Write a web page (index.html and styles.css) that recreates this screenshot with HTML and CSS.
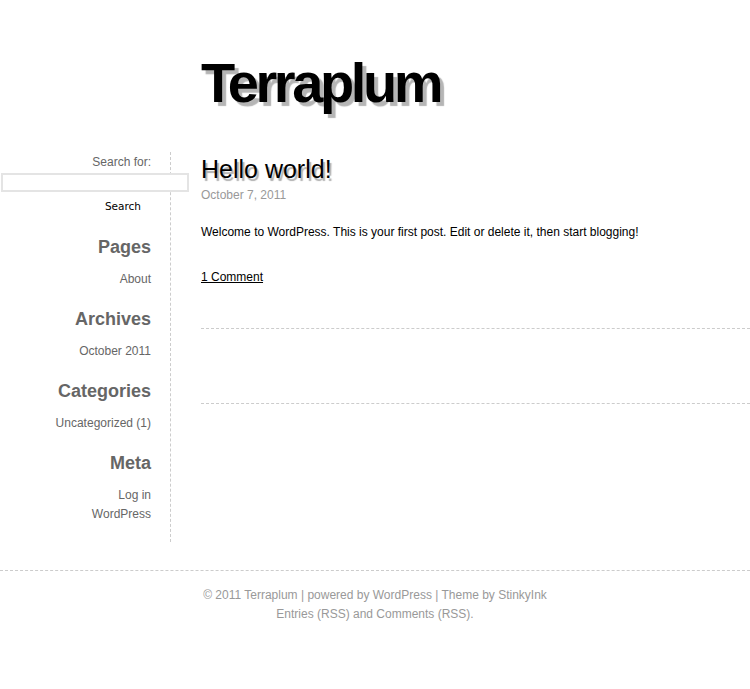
FILE: index.html
```html
<!DOCTYPE html>
<html>
<head>
<meta charset="utf-8">
<title>Terraplum</title>
<link rel="stylesheet" href="styles.css">
</head>
<body>
<div class="header">
  <h1 class="site-title">Terraplum</h1>
</div>
<div class="main">
  <div class="sidebar">
    <form class="search">
      <label class="search-label">Search for:</label>
      <input class="search-input" type="text">
      <button class="search-button" type="button">Search</button>
    </form>
    <div class="widget">
      <h2 class="widget-title">Pages</h2>
      <ul class="widget-list"><li><a href="#">About</a></li></ul>
    </div>
    <div class="widget">
      <h2 class="widget-title">Archives</h2>
      <ul class="widget-list"><li><a href="#">October 2011</a></li></ul>
    </div>
    <div class="widget">
      <h2 class="widget-title">Categories</h2>
      <ul class="widget-list"><li><a href="#">Uncategorized</a> (1)</li></ul>
    </div>
    <div class="widget">
      <h2 class="widget-title">Meta</h2>
      <ul class="widget-list"><li><a href="#">Log in</a></li><li><a href="#">WordPress</a></li></ul>
    </div>
  </div>
  <div class="content">
    <div class="post">
      <h2 class="post-title">Hello world!</h2>
      <div class="post-date">October 7, 2011</div>
      <p class="post-text">Welcome to WordPress. This is your first post. Edit or delete it, then start blogging!</p>
      <a class="post-comments" href="#">1 Comment</a>
    </div>
    <div class="navigation"></div>
  </div>
</div>
<div class="footer">
  <p class="footer-line">© 2011 Terraplum | powered by WordPress | Theme by StinkyInk</p>
  <p class="footer-line">Entries (RSS) and Comments (RSS).</p>
</div>
</body>
</html>
```
FILE: styles.css
```css
html, body {
  margin: 0;
  padding: 0;
  background: #fff;
}
body {
  font-family: "Liberation Sans", Arial, sans-serif;
  font-size: 12px;
  color: #000;
}
a { color: inherit; text-decoration: none; }

.header {
  padding: 55px 0 0 201px;
  height: 152px;
  box-sizing: border-box;
}
.site-title {
  margin: 0;
  font-size: 56px;
  line-height: 56px;
  font-weight: bold;
  letter-spacing: -3.4px;
  color: #000;
  text-shadow: 4px 4px 1px #b5b5b5;
}

.main {
  display: flex;
  align-items: stretch;
}
.sidebar {
  width: 151px;
  padding: 1px 19px 0 0;
  border-right: 1px dashed #ccc;
  text-align: right;
  color: #666;
}
.search {
  margin: 0 0 21px;
  display: flex;
  flex-direction: column;
}
.search-label {
  display: block;
  line-height: 18px;
  height: 18px;
  margin-bottom: 2px;
}
.search-input {
  display: block;
  width: 188px;
  height: 19px;
  box-sizing: border-box;
  margin: 0 0 0 1px;
  border: 2px solid #e4e4e4;
  padding: 0;
  background: #fff;
}
.search-button {
  align-self: flex-end;
  margin: 5px 0 0;
  padding: 0 10px 0 0;
  height: 18px;
  line-height: 18px;
  border: none;
  background: none;
  font-family: "DejaVu Sans", sans-serif;
  font-size: 10.5px;
  color: #000;
}
.widget-title {
  margin: 0 0 12px;
  font-size: 18px;
  line-height: 22px;
  font-weight: bold;
  color: #666;
}
.widget-list {
  list-style: none;
  margin: 0 0 19px;
  padding: 0;
  line-height: 19px;
}
.widget:last-child .widget-list {
  margin-bottom: 18px;
}

.content {
  flex: 1;
  padding-left: 30px;
}
.post {
  padding-top: 2px;
  padding-bottom: 41px;
  border-bottom: 1px dashed #ccc;
}
.post-title {
  margin: 0;
  font-size: 25px;
  line-height: 30px;
  font-weight: normal;
  color: #000;
  text-shadow: 2px 3px 1px #b0b0b0;
}
.post-date {
  margin-top: 2px;
  line-height: 19px;
  color: #999;
}
.post-text {
  margin: 18px 0 0;
  line-height: 19px;
}
.post-comments {
  display: inline-block;
  margin-top: 26px;
  line-height: 19px;
  text-decoration: underline;
}
.navigation {
  height: 74px;
  border-bottom: 1px dashed #ccc;
}

.footer {
  margin-top: 28px;
  border-top: 1px dashed #ccc;
  padding-top: 15px;
  text-align: center;
  color: #999;
}
.footer-line {
  margin: 0;
  line-height: 19px;
}
```
